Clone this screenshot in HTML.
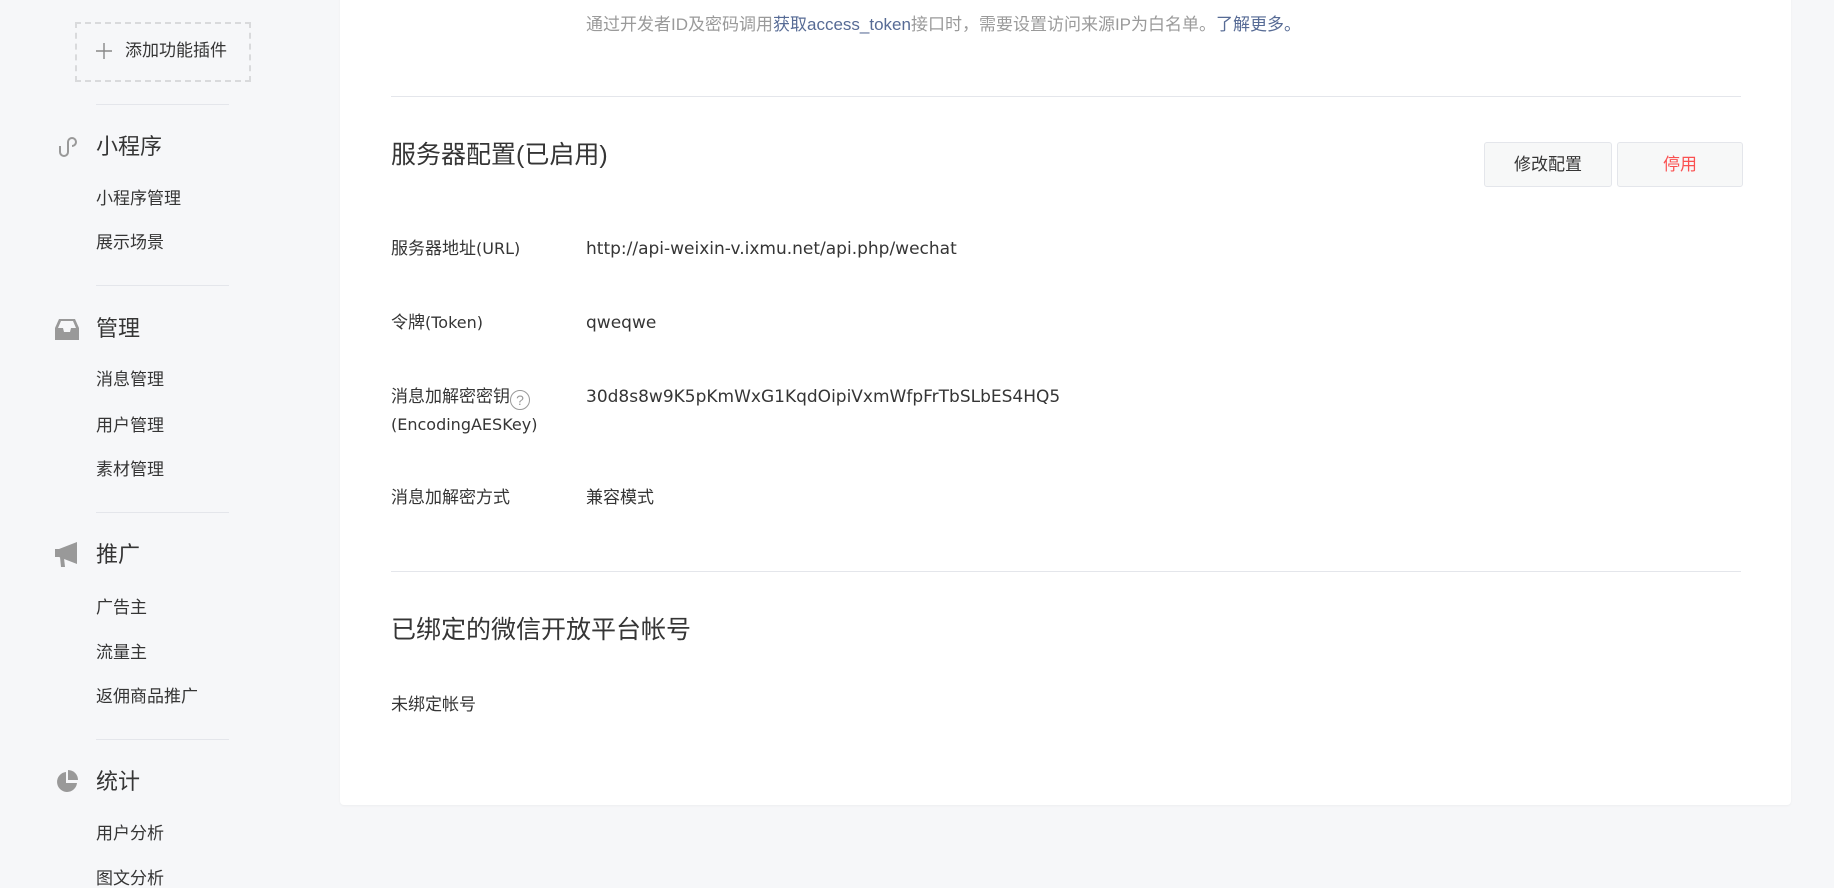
<!DOCTYPE html>
<html><head><meta charset="utf-8"><style>
body{margin:0;width:1834px;height:886px;background:#f6f7f9;font-family:"Liberation Sans","Noto Sans CJK SC",sans-serif;color:#353535;position:relative;overflow:hidden}
.a{position:absolute;white-space:nowrap;line-height:1}
.sub{font-size:17px;left:96px;color:#353535}
.tt{font-size:22px;left:96px;color:#353535}
.dv{position:absolute;left:96px;width:133px;height:1px;background:#e4e6eb}
.card{position:absolute;left:340px;top:-10px;width:1451px;height:815px;background:#fff;border-radius:4px;box-shadow:0 1px 2px rgba(0,0,0,.04)}
.lb{font-size:17px;left:391px}
.lb .l{font-family:"DejaVu Sans",sans-serif;font-size:16px}
.vl{font-size:17px;left:586px}
.vl .l{font-family:"DejaVu Sans",sans-serif}
.hl{position:absolute;left:391px;width:1350px;height:1px;background:#e4e6eb}
.btn{position:absolute;top:142px;height:43px;border:1px solid #e4e6eb;border-radius:3px;background:#f7f8f8;font-size:17px;text-align:center;line-height:43px}
</style></head><body>
<div style="position:absolute;left:75px;top:22px;width:172px;height:56px;border:2px dashed #d9dadc"></div>
<svg class="a" style="left:96px;top:43px" width="16" height="16" viewBox="0 0 16 16"><path d="M8 0v16M0 8h16" stroke="#888" stroke-width="1.4"/></svg>
<div class="a" style="left:125px;top:42px;font-size:17px;color:#353535">添加功能插件</div>
<div class="dv" style="top:104px"></div>
<svg class="a" style="left:55px;top:135px" width="24" height="24" viewBox="0 0 24 24"><path d="M9 21a4 4 0 0 1-4-4V11M9 21a4 4 0 0 0 4-4V7a4 4 0 1 1 4 4" fill="none" stroke="#999" stroke-width="2"/></svg>
<div class="a tt" style="top:136px">小程序</div>
<div class="a sub" style="top:190px">小程序管理</div>
<div class="a sub" style="top:234px">展示场景</div>
<div class="dv" style="top:285px"></div>
<svg class="a" style="left:55px;top:318px" width="24" height="22" viewBox="0 0 24 22"><path d="M4 1h16l4 9v12H0V10z" fill="#999"/><path d="M3 10h5l1 4h6l1-4h5L18 3H6z" fill="#f6f7f9"/></svg>
<div class="a tt" style="top:318px">管理</div>
<div class="a sub" style="top:371px">消息管理</div>
<div class="a sub" style="top:417px">用户管理</div>
<div class="a sub" style="top:461px">素材管理</div>
<div class="dv" style="top:512px"></div>
<svg class="a" style="left:55px;top:542px" width="24" height="26" viewBox="0 0 24 26"><path d="M0 7h4l18-7v22L4 15H0z M5 15l4 1 1 9H6z" fill="#999"/></svg>
<div class="a tt" style="top:544px">推广</div>
<div class="a sub" style="top:599px">广告主</div>
<div class="a sub" style="top:644px">流量主</div>
<div class="a sub" style="top:688px">返佣商品推广</div>
<div class="dv" style="top:739px"></div>
<svg class="a" style="left:55px;top:770px" width="24" height="24" viewBox="0 0 24 24"><path d="M11 2a10 10 0 1 0 11 11H11z" fill="#999"/><path d="M13 0a10 10 0 0 1 10 10H13z" fill="#999"/></svg>
<div class="a tt" style="top:771px">统计</div>
<div class="a sub" style="top:825px">用户分析</div>
<div class="a sub" style="top:870px">图文分析</div>

<div class="card"></div>
<div class="a" style="left:586px;top:16px;font-size:17px;color:#9a9a9a">通过开发者ID及密码调用<span style="color:#576b95">获取access_token</span>接口时，需要设置访问来源IP为白名单。<span style="color:#576b95">了解更多。</span></div>
<div class="hl" style="top:96px"></div>
<div class="a" style="left:391px;top:143px;font-size:25px;color:#353535">服务器配置(已启用)</div>
<div class="btn" style="left:1484px;width:126px">修改配置</div>
<div class="btn" style="left:1617px;width:124px;color:#fa5151">停用</div>
<div class="a lb" style="top:240px">服务器地址<span class="l">(URL)</span></div>
<div class="a vl" style="top:240px"><span class="l">http://api-weixin-v.ixmu.net/api.php/wechat</span></div>
<div class="a lb" style="top:314px">令牌<span class="l">(Token)</span></div>
<div class="a vl" style="top:314px"><span class="l">qweqwe</span></div>
<div class="a lb" style="top:388px">消息加解密密钥<span style="display:inline-block;width:18px;height:18px;border:1px solid #999;border-radius:50%;font-size:14px;line-height:18px;text-align:center;color:#999;vertical-align:-3px">?</span></div>
<div class="a lb" style="top:416px"><span class="l">(EncodingAESKey)</span></div>
<div class="a vl" style="top:388px"><span class="l">30d8s8w9K5pKmWxG1KqdOipiVxmWfpFrTbSLbES4HQ5</span></div>
<div class="a lb" style="top:489px">消息加解密方式</div>
<div class="a vl" style="top:489px">兼容模式</div>
<div class="hl" style="top:571px"></div>
<div class="a" style="left:391px;top:618px;font-size:25px;color:#353535">已绑定的微信开放平台帐号</div>
<div class="a lb" style="top:696px">未绑定帐号</div>
</body></html>
